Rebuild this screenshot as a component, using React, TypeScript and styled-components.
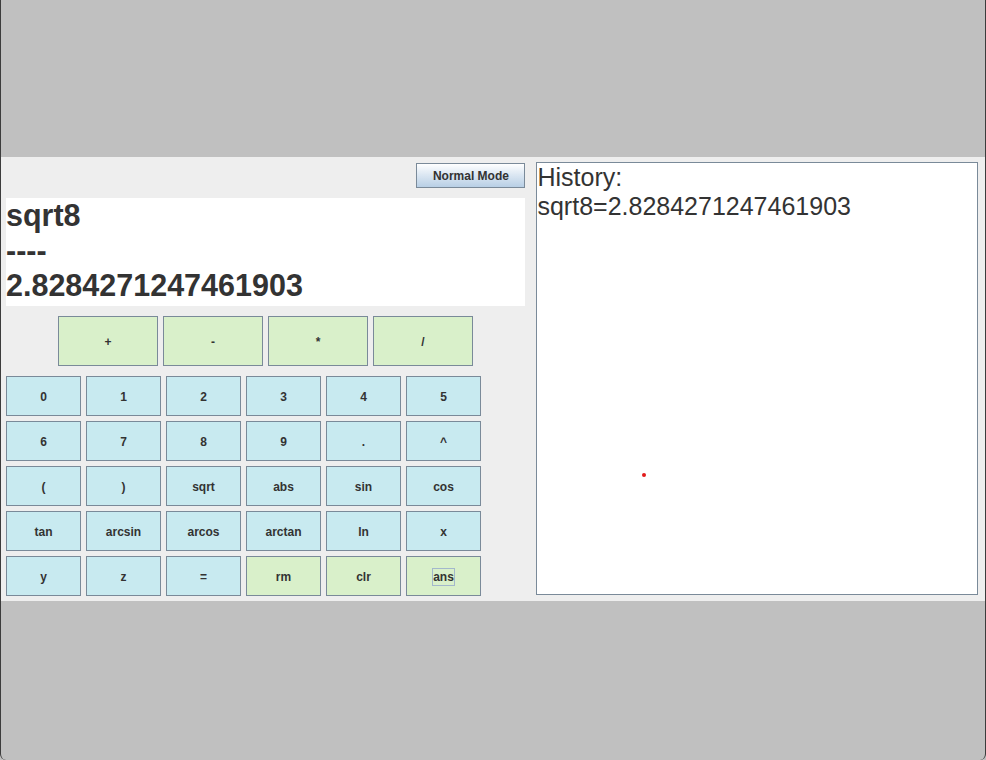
import React from "react";
import styled, { createGlobalStyle } from "styled-components";

const Global = createGlobalStyle`
  html, body {
    margin: 0;
    padding: 0;
    background: #c0c0c0;
  }
  * {
    box-sizing: border-box;
  }
`;

const ops = ["+", "-", "*", "/"];

const keys: { label: string; green?: boolean; focus?: boolean }[] = [
  { label: "0" }, { label: "1" }, { label: "2" }, { label: "3" }, { label: "4" }, { label: "5" },
  { label: "6" }, { label: "7" }, { label: "8" }, { label: "9" }, { label: "." }, { label: "^" },
  { label: "(" }, { label: ")" }, { label: "sqrt" }, { label: "abs" }, { label: "sin" }, { label: "cos" },
  { label: "tan" }, { label: "arcsin" }, { label: "arcos" }, { label: "arctan" }, { label: "ln" }, { label: "x" },
  { label: "y" }, { label: "z" }, { label: "=" },
  { label: "rm", green: true }, { label: "clr", green: true }, { label: "ans", green: true, focus: true },
];

const App = () => {
  return (
    <Frame>
      <Global />
      <TopSpace />
      <Panel>
        <LeftCol>
          <Toolbar>
            <ModeButton>Normal Mode</ModeButton>
          </Toolbar>
          <Display>
            <div>sqrt8</div>
            <div>----</div>
            <div>2.8284271247461903</div>
          </Display>
          <OpRow>
            {ops.map((o) => (
              <OpKey key={o}>{o}</OpKey>
            ))}
          </OpRow>
          <KeyGrid>
            {keys.map((k) => (
              <Key key={k.label} $green={k.green}>
                {k.focus ? <Focus>{k.label}</Focus> : k.label}
              </Key>
            ))}
          </KeyGrid>
        </LeftCol>
        <History>
          <div>History:</div>
          <div>sqrt8=2.8284271247461903</div>
          <Dot />
        </History>
      </Panel>
    </Frame>
  );
};

export default App;

const Frame = styled.div`
  width: 986px;
  height: 760px;
  background: #c0c0c0;
  border-left: 1px solid #3c3c3c;
  border-right: 1px solid #3c3c3c;
  border-radius: 0 0 6px 6px;
  overflow: hidden;
  display: flex;
  flex-direction: column;
  font-family: "Liberation Sans", Arial, sans-serif;
  color: #333333;
`;

const TopSpace = styled.div`
  height: 157px;
`;

const Panel = styled.div`
  height: 444px;
  background: #eeeeee;
  display: flex;
  padding: 6px 7px 0 5px;
  gap: 11px;
`;

const LeftCol = styled.div`
  width: 520px;
  display: flex;
  flex-direction: column;
`;

const Toolbar = styled.div`
  display: flex;
  justify-content: flex-end;
  height: 25px;
`;

const ModeButton = styled.div`
  width: 109px;
  height: 25px;
  border: 1px solid #7a8a99;
  background: linear-gradient(#ffffff, #dde8f3 45%, #b8cfe5);
  font-size: 12px;
  font-weight: bold;
  color: #333333;
  display: flex;
  align-items: center;
  justify-content: center;
`;

const Display = styled.div`
  margin-top: 10px;
  height: 108px;
  background: #ffffff;
  font-size: 30.5px;
  font-weight: bold;
  line-height: 35px;
  color: #333333;
`;

const OpRow = styled.div`
  margin-top: 10px;
  display: flex;
  gap: 5px;
  padding-left: 52px;
`;

const BaseKey = styled.div<{ $green?: boolean }>`
  border: 1px solid #7a8a99;
  background: ${(p) => (p.$green ? "#d9f0ca" : "#c8eaf0")};
  font-size: 12px;
  font-weight: bold;
  color: #333333;
  display: flex;
  align-items: center;
  justify-content: center;
  padding-top: 1px;
`;

const OpKey = styled(BaseKey).attrs({ $green: true })`
  width: 100px;
  height: 50px;
`;

const KeyGrid = styled.div`
  margin-top: 10px;
  display: grid;
  grid-template-columns: repeat(6, 75px);
  grid-auto-rows: 40px;
  gap: 5px;
`;

const Key = styled(BaseKey)``;

const Focus = styled.span`
  border: 1px solid #a3b8cc;
  padding: 1px 0;
  line-height: 14px;
`;

const History = styled.div`
  position: relative;
  margin-top: -1px;
  width: 442px;
  height: 433px;
  background: #ffffff;
  border: 1px solid #7a8a99;
  font-size: 25px;
  line-height: 29px;
  color: #333333;
`;

const Dot = styled.span`
  position: absolute;
  left: 105px;
  top: 310px;
  width: 4px;
  height: 4px;
  border-radius: 50%;
  background: #e21b1b;
`;
